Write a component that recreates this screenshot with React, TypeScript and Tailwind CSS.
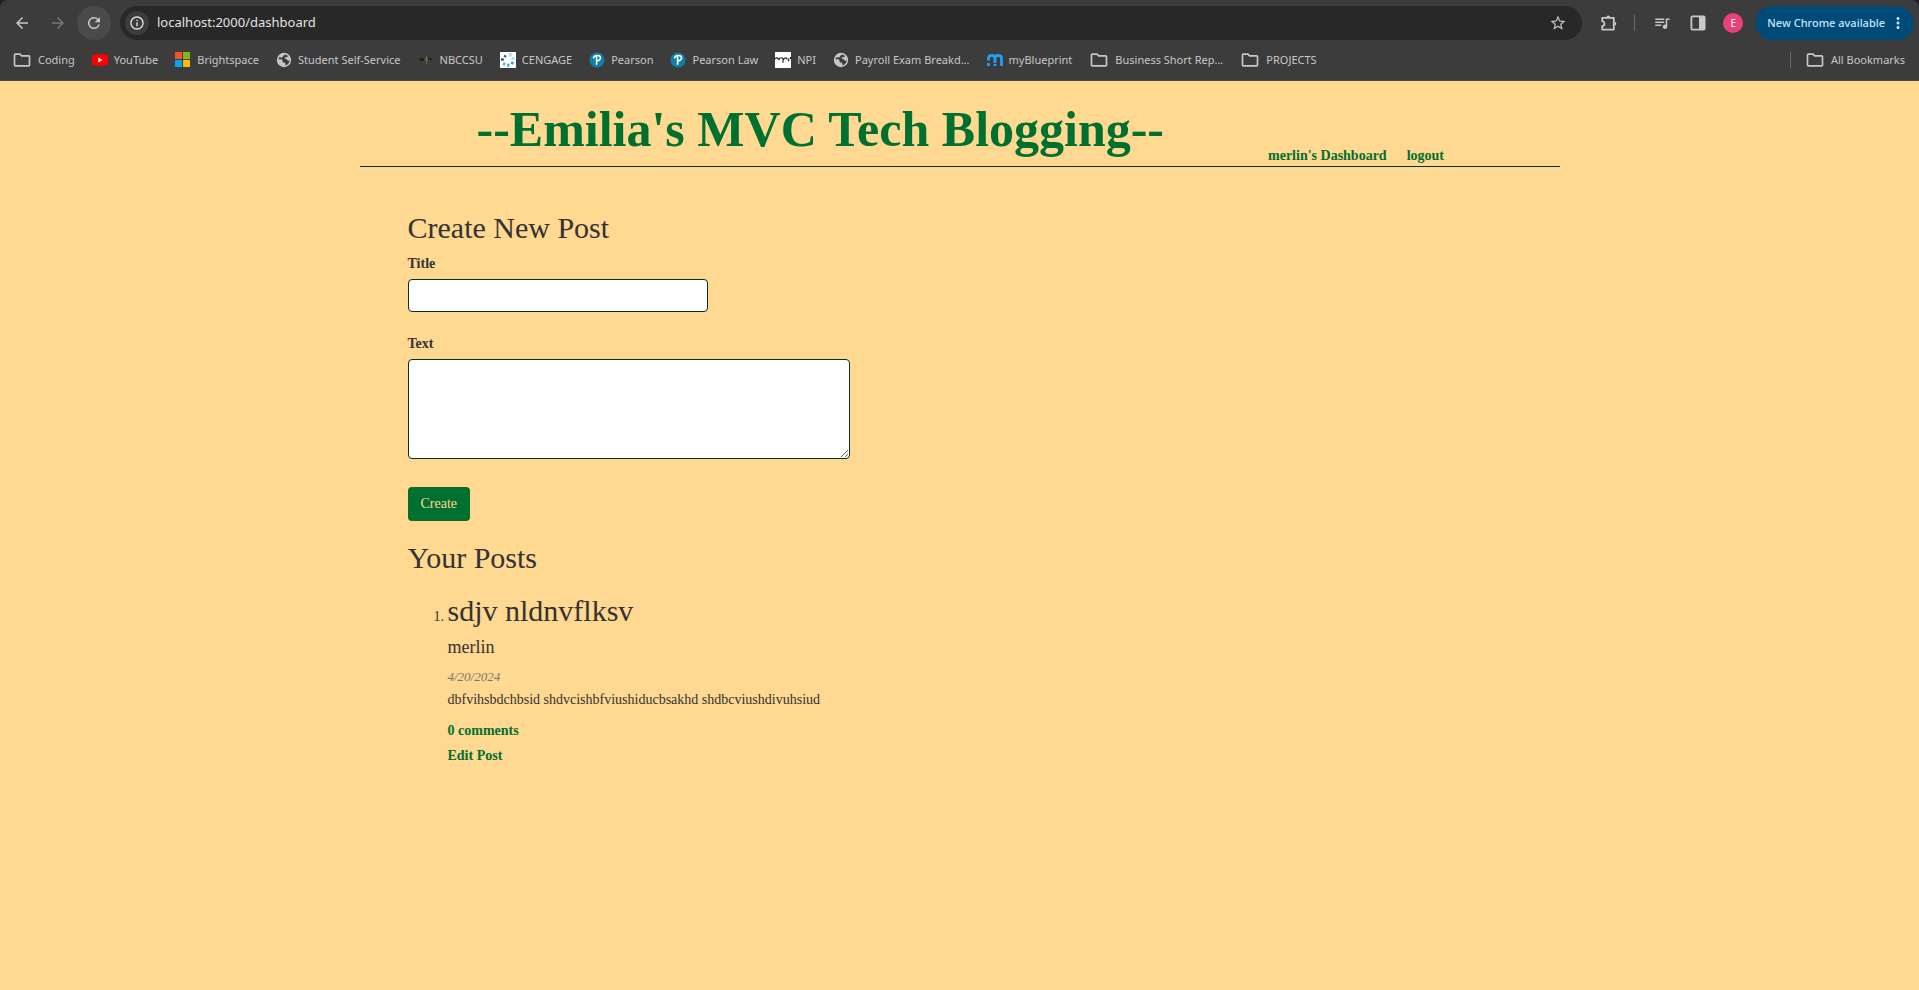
import React from "react";
import { MdArrowBack, MdArrowForward, MdRefresh, MdInfoOutline, MdStarBorder, MdQueueMusic, MdMoreVert, MdOutlineFolder } from "react-icons/md";

const chromeFont = "font-['Noto_Sans','Open_Sans',sans-serif]";
const serif = "font-['Liberation_Serif','Times_New_Roman',serif]";

function YouTubeIcon() {
  return (
    <svg viewBox="0 0 16 16" className="size-4">
      <rect x="0" y="2.2" width="16" height="11.6" rx="3" fill="#f00" />
      <path d="M6.3 5.6 10.5 8l-4.2 2.4z" fill="#fff" />
    </svg>
  );
}

function MicrosoftIcon() {
  return (
    <svg viewBox="0 0 16 16" className="size-4" shapeRendering="crispEdges">
      <rect width="7" height="7" fill="#f35325" />
      <rect x="8" width="7" height="7" fill="#81bc06" />
      <rect y="8" width="7" height="7" fill="#05a6f0" />
      <rect x="8" y="8" width="7" height="7" fill="#ffba08" />
    </svg>
  );
}

function GlobeIcon() {
  return (
    <svg viewBox="0 0 16 16" className="size-4">
      <circle cx="8" cy="8" r="7.200" fill="#c3c5c9" />
      <path d="M8.800 2.600 12 3.800c-.2 1-1 1.600-2.200 1.400-1-.1-1.600.6-1 1.400.6.6 1.600.3 2.200 1 .5.5.4 1.100 1.200 1.200l1.600-.2c-.4 2.400-2 4.200-4.400 4.900.3-1.200.2-2-.5-2.500-.8-.5-2-.4-2.400-1.400-.3-.8.3-1.400-.4-2-.8-.6-2.400-.4-3.700-.3C2.500 6.700 3 5.700 3.800 5c.8.6 1.800.8 2.600.3.9-.6 1-2 2.400-2.700z" fill="#3c3c3c" />
    </svg>
  );
}

function NbccIcon() {
  return (
    <svg viewBox="0 0 16 16" className="size-4">
      <path d="M1 6h5v3H2zM10 6h4v2h-4z" fill="#222" />
      <path d="M7 6h1v3H7z" fill="#a33b2c" />
      <path d="M8 4h1v8H8z" fill="#3f7d49" />
      <path d="M9 6h1v3H9z" fill="#8a5a2e" />
    </svg>
  );
}

function CengageIcon() {
  return (
    <svg viewBox="0 0 16 16" className="size-4">
      <rect width="16" height="16" fill="#fff" />
      <path d="M8.500 1.500 12 1l-.5 3.500-2 .5zM11.500 5.500l3-1v3.500l-3-.5z" fill="#a8dcf5" />
      <path d="m11.500 9.500 2.500.5-1 2.800-2.500-1zM7.500 11.500l2 .5-.5 3-2-.5z" fill="#2f9bd6" />
      <path d="m3.500 10.300 2.300.7-.8 2.800-2.500-.8z" fill="#56b4e4" />
      <path d="m1 6.300 2.800.3v2.200L1 8.500z" fill="#0b4a7c" />
      <path d="m4 2.800 2.500.9-.6 2-2.200-1z" fill="#12639c" />
    </svg>
  );
}

function PearsonIcon() {
  return (
    <svg viewBox="0 0 16 16" className="size-4">
      <circle cx="8" cy="8" r="7.500" fill="#0f7fa6" />
      <path d="M4.600 5.800C5.200 3.200 11.500 2.400 11.500 5.800c0 2.400-2.400 3.200-4 2.900M7.600 4.800v7.400" fill="none" stroke="#fff" strokeWidth="1.600" strokeLinecap="round" />
    </svg>
  );
}

function NpiIcon() {
  return (
    <svg viewBox="0 0 16 16" className="size-4">
      <rect width="16" height="16" fill="#fff" />
      <path d="M0 6.800c1.300-1.600 2.800-1 4 .6 1.300-2.400 3.400-2 4.500 0 1.300-2 3-2 4 .2M8 7.500v3.200M13.800 6.500v3M15.500 5v2" fill="none" stroke="#222" strokeWidth="1.200" />
    </svg>
  );
}

function BlueprintIcon() {
  return (
    <svg viewBox="0 0 16 16" className="size-4">
      <path d="M1.500 8.500V6.500C1.500 2.300 8 2.300 8 6.500V11M8 6.500C8 2.300 14.500 2.300 14.500 6.500V14M1.500 11v3M8 12v2" fill="none" stroke="#23a0f5" strokeWidth="2.800" />
    </svg>
  );
}

function ExtensionIcon() {
  return (
    <svg viewBox="0 0 18 18" className="size-[18px]" fill="none" stroke="#c7c7c7" strokeWidth="1.800" strokeLinejoin="round">
      <path d="M2.200 3.800h11.600v11.800H2.200v-3.400c3-.6 3-4.400 0-5z" />
      <path d="M6.400 3.300a1.900 1.900 0 0 1 3.800 0zM14.400 7.800a1.900 1.900 0 0 1 0 3.800z" fill="#c7c7c7" stroke="none" />
    </svg>
  );
}

function SidePanelIcon() {
  return (
    <svg viewBox="0 0 18 18" className="size-[18px]">
      <rect x="2.400" y="2.400" width="13.200" height="13.200" rx="1" fill="none" stroke="#c7c7c7" strokeWidth="1.800" />
      <path d="M10 2.500h5.500v13H10z" fill="#c7c7c7" />
    </svg>
  );
}

const folder = <MdOutlineFolder className="size-5 text-[#c7c7c7]" />;

const bookmarks: { label: string; icon: React.ReactNode }[] = [
  { label: "Coding", icon: folder },
  { label: "YouTube", icon: <YouTubeIcon /> },
  { label: "Brightspace", icon: <MicrosoftIcon /> },
  { label: "Student Self-Service", icon: <GlobeIcon /> },
  { label: "NBCCSU", icon: <NbccIcon /> },
  { label: "CENGAGE", icon: <CengageIcon /> },
  { label: "Pearson", icon: <PearsonIcon /> },
  { label: "Pearson Law", icon: <PearsonIcon /> },
  { label: "NPI", icon: <NpiIcon /> },
  { label: "Payroll Exam Breakd...", icon: <GlobeIcon /> },
  { label: "myBlueprint", icon: <BlueprintIcon /> },
  { label: "Business Short Rep...", icon: folder },
  { label: "PROJECTS", icon: folder },
];

function BrowserChrome() {
  return (
    <div className={`${chromeFont} bg-[#1f2020]`}>
      <div className="rounded-t-lg border-b border-[#4a4748] bg-[#3c3c3c] text-[#c7c7c7] h-[81px]">
        <div className="flex items-center h-[46px] pl-2 pr-[5px]">
          <button aria-label="Back" className="size-7 grid place-items-center"><MdArrowBack className="size-[18px]" /></button>
          <button aria-label="Forward" className="ml-2 size-7 grid place-items-center text-[#777]"><MdArrowForward className="size-[18px]" /></button>
          <button aria-label="Reload" className="ml-[5px] size-[34px] rounded-full bg-[#4a4a4a] grid place-items-center"><MdRefresh className="size-[18px]" /></button>
          <div className="ml-[9px] flex-1 flex items-center h-[34px] rounded-full bg-[#282828] pl-[5px] pr-[15px]">
            <span className="size-6 rounded-full bg-[#3c3c3c] grid place-items-center"><MdInfoOutline className="size-4 text-[#e3e3e3]" /></span>
            <input aria-label="Address" defaultValue="localhost:2000/dashboard" className="ml-2 flex-1 bg-transparent text-[13px] text-[#e3e3e3] outline-none" />
            <button aria-label="Bookmark this page"><MdStarBorder className="size-[18px]" /></button>
          </div>
          <button aria-label="Extensions" className="ml-[18px]"><ExtensionIcon /></button>
          <span className="ml-4 h-4 w-px bg-[#6a6a6a]" />
          <button aria-label="Media" className="ml-[18px]"><MdQueueMusic className="size-[18px]" /></button>
          <button aria-label="Side panel" className="ml-[18px]"><SidePanelIcon /></button>
          <button aria-label="Profile" className="ml-4 size-5 rounded-full bg-[#ec407a] text-white text-[10px]">E</button>
          <button className="ml-3 flex items-center gap-1 h-[34px] rounded-full bg-[#004a77] text-[#c2e7ff] text-[11px] font-medium pl-3 pr-[7px] whitespace-nowrap">
            New Chrome available <MdMoreVert className="size-[18px]" />
          </button>
        </div>
        <div className="flex items-center h-7 pl-3 pr-[14px] text-[11px]">
          {bookmarks.map((b) => (
            <a key={b.label} href="#" className="flex items-center gap-[6px] mr-[17px] whitespace-nowrap">{b.icon}{b.label}</a>
          ))}
          <span className="ml-auto h-4 w-px bg-[#6a6a6a]" />
          <a href="#" className="ml-[14px] flex items-center gap-[6px] whitespace-nowrap">{folder}All Bookmarks</a>
        </div>
      </div>
    </div>
  );
}

export default function App() {
  return (
    <div className="min-h-screen bg-[#ffd891]">
      <BrowserChrome />
      <div className={`${serif} max-w-[1200px] mx-auto text-sm leading-5 text-[#333]`}>
        <header className="flex items-end border-b border-[#00331a] h-[86px] text-[#007030] font-bold">
          <h1 className="ml-[117px] text-[50px] leading-[74px]">--Emilia's MVC Tech Blogging--</h1>
          <nav className="ml-[104px] flex gap-5">
            <a href="#">merlin's Dashboard</a>
            <a href="#">logout</a>
          </nav>
        </header>
        <main className="px-12 pt-11">
          <form onSubmit={(e) => e.preventDefault()}>
            <h2 className="text-[30px] leading-[33px]">Create New Post</h2>
            <label htmlFor="title" className="block mt-[10px] font-bold">Title</label>
            <input id="title" className="block mt-[5px] w-[300px] h-[33px] px-3 rounded border border-[#00331a] bg-white" />
            <label htmlFor="text" className="block mt-[22px] font-bold">Text</label>
            <textarea id="text" className="block mt-[5px] w-[442px] h-[100px] px-3 py-2 rounded border border-[#00331a] bg-white" />
            <button className="block mt-7 h-[34px] px-[13px] rounded bg-[#007030] text-[#ffd891]">Create</button>
          </form>
          <h2 className="mt-5 text-[30px] leading-[33px]">Your Posts</h2>
          <ol className="mt-5 pl-10 list-decimal">
            <li>
              <h2 className="text-[30px] leading-[33px]">sdjv nldnvflksv</h2>
              <h4 className="mt-[10px] text-lg leading-5">merlin</h4>
              <p className="mt-[10px] text-[13px] leading-5 italic text-[#777]">4/20/2024</p>
              <p className="mt-[3px]">dbfvihsbdchbsid shdvcishbfviushiducbsakhd shdbcviushdivuhsiud</p>
              <a href="#" className="block mt-[11px] font-bold text-[#007030]">0 comments</a>
              <a href="#" className="block mt-[5px] font-bold text-[#007030]">Edit Post</a>
            </li>
          </ol>
        </main>
      </div>
    </div>
  );
}
